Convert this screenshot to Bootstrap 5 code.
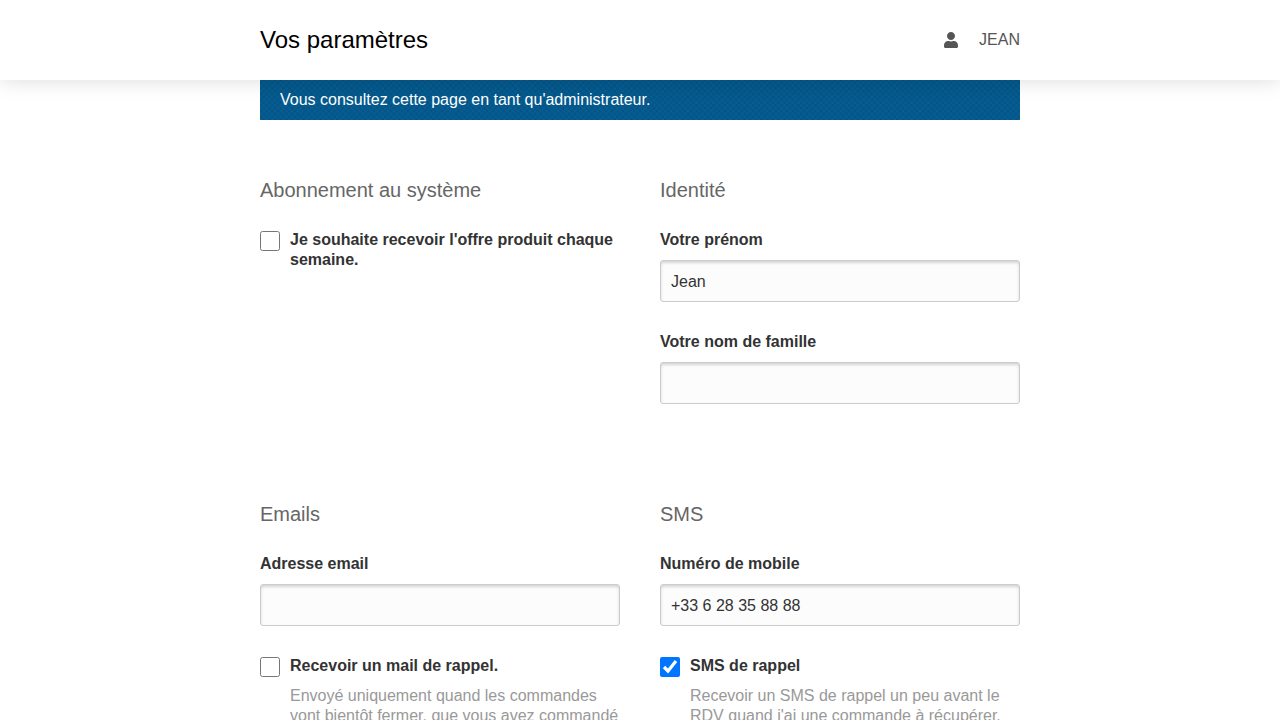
<!DOCTYPE html>
<html lang="fr">
<head>
<meta charset="utf-8">
<title>Vos paramètres</title>
<link href="https://cdn.jsdelivr.net/npm/bootstrap@5.3.0/dist/css/bootstrap.min.css" rel="stylesheet">
<style>
body { font-family: "Liberation Sans", Arial, sans-serif; font-size: 16px; line-height: 20px; color: #333; background: #fff; }
.page-head { height: 80px; background: #fff; box-shadow: 0 0 20px rgba(0,0,0,.15); position: relative; z-index: 1; }
.shell { width: 760px; margin: 0 auto; }
.page-title { font-size: 24px; line-height: 30px; font-weight: 400; color: #000; margin: 0; }
.user-link { color: #555; text-decoration: none; gap: 21px; }
.user-link svg { width: 14px; height: 16px; fill: #555; }
.admin-bar { height: 40px; padding: 10px 20px; color: #fff; background-color: #00568a;
  background-image: repeating-linear-gradient(45deg, rgba(255,255,255,.02) 0 2px, transparent 2px 4px), repeating-linear-gradient(-45deg, rgba(255,255,255,.02) 0 2px, transparent 2px 4px); }
.settings-row { --bs-gutter-x: 40px; --bs-gutter-y: 0; }
.first-block { padding-top: 58px; min-height: 382px; }
.block { min-height: 280px; }
.block-title { font-size: 20px; line-height: 24px; font-weight: 400; color: #666; margin: 0 0 28px; }
.field { margin-bottom: 30px; }
.field label { display: block; font-weight: 700; margin-bottom: 10px; }
.text-field { display: block; width: 100%; height: 42px; padding: 2px 10px 0; font-size: 16px; color: #333; background: #fcfcfc; border: 1px solid #ccc; border-radius: 3px; box-shadow: inset 0 2px 3px rgba(0,0,0,.16); outline: 0; font-family: inherit; }
.check-line { display: flex; gap: 10px; align-items: flex-start; font-weight: 700; margin: 0; }
.check-line input { width: 20px; height: 20px; flex: none; margin: 1px 0 0; }
.check-help { color: #999; margin: 9px 0 0 30px; line-height: 19.5px; }
</style>
</head>
<body>
<header class="page-head">
  <div class="shell h-100 d-flex align-items-center justify-content-between">
    <h1 class="page-title">Vos paramètres</h1>
    <a class="user-link d-flex align-items-center" href="#">
      <svg viewBox="0 0 448 512" aria-hidden="true"><path d="M224 256c70.700 0 128-57.300 128-128S294.700 0 224 0 96 57.300 96 128s57.300 128 128 128zm89.600 32h-16.700c-22.200 10.200-46.900 16-72.900 16s-50.600-5.800-72.900-16h-16.700C60.200 288 0 348.200 0 422.400V464c0 26.500 21.500 48 48 48h352c26.500 0 48-21.500 48-48v-41.600c0-74.200-60.200-134.400-134.400-134.400z"/></svg>
      <span>JEAN</span>
    </a>
  </div>
</header>
<main class="shell">
  <div class="admin-bar">Vous consultez cette page en tant qu'administrateur.</div>
  <div class="row settings-row first-block">
    <section class="col-6">
      <h2 class="block-title">Abonnement au système</h2>
      <label class="check-line"><input type="checkbox"><span>Je souhaite recevoir l'offre produit chaque semaine.</span></label>
    </section>
    <section class="col-6">
      <h2 class="block-title">Identité</h2>
      <div class="field"><label for="fn">Votre prénom</label><input id="fn" class="text-field" type="text" value="Jean"></div>
      <div class="field"><label for="ln">Votre nom de famille</label><input id="ln" class="text-field" type="text"></div>
    </section>
  </div>
  <div class="row settings-row block">
    <section class="col-6">
      <h2 class="block-title">Emails</h2>
      <div class="field"><label for="em">Adresse email</label><input id="em" class="text-field" type="email"></div>
      <label class="check-line"><input type="checkbox"><span>Recevoir un mail de rappel.</span></label>
      <p class="check-help">Envoyé uniquement quand les commandes vont bientôt fermer, que vous avez commandé</p>
    </section>
    <section class="col-6">
      <h2 class="block-title">SMS</h2>
      <div class="field"><label for="mo">Numéro de mobile</label><input id="mo" class="text-field" type="tel" value="+33 6 28 35 88 88"></div>
      <label class="check-line"><input type="checkbox" checked><span>SMS de rappel</span></label>
      <p class="check-help">Recevoir un SMS de rappel un peu avant le RDV quand j'ai une commande à récupérer.</p>
    </section>
  </div>
</main>
<script src="https://cdn.jsdelivr.net/npm/bootstrap@5.3.0/dist/js/bootstrap.bundle.min.js"></script>
</body>
</html>
